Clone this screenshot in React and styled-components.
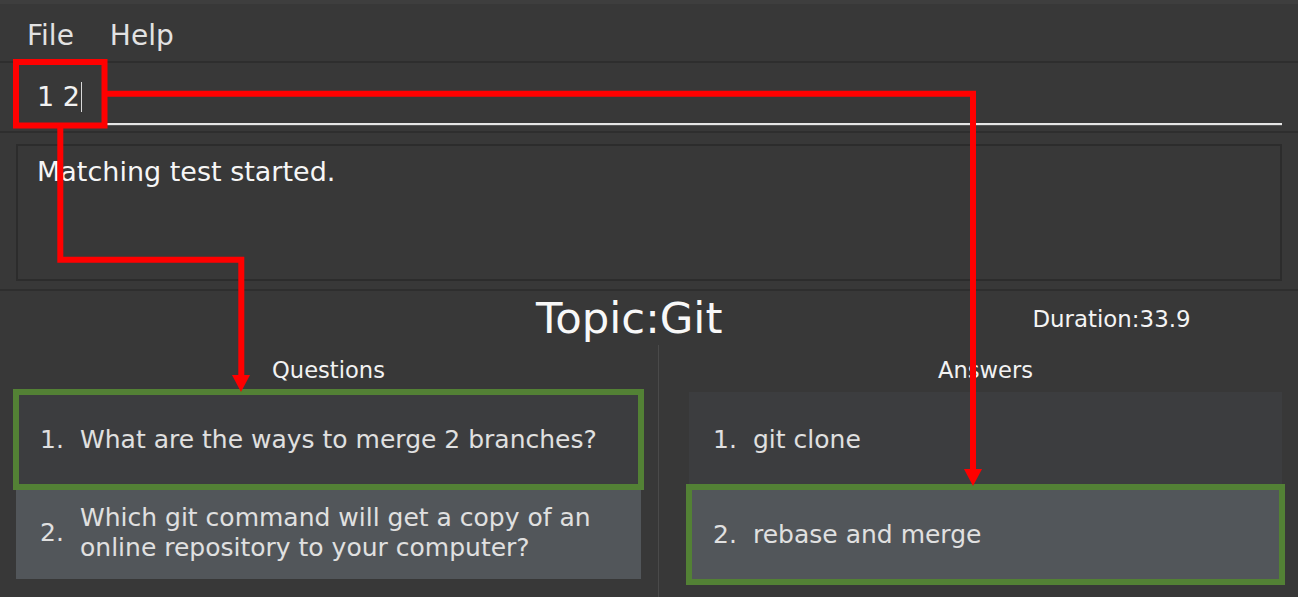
import React from 'react';
import styled, { createGlobalStyle } from 'styled-components';

const GlobalStyle = createGlobalStyle`
  html, body {
    margin: 0;
    padding: 0;
    background: #383838;
  }
  body {
    font-family: "DejaVu Sans", "Noto Sans", sans-serif;
    color: #e6e6e6;
  }
`;

const Window = styled.div`
  position: relative;
  width: 1298px;
  height: 597px;
  overflow: hidden;
  background: #383838;
`;

const MenuBar = styled.nav`
  display: flex;
  gap: 36px;
  border-top: 4px solid #3e3e3e;
  border-bottom: 2px solid #2e2e2e;
  padding: 15px 0 9px 27px;
`;

const MenuItem = styled.span`
  font-size: 28px;
  line-height: 33px;
  color: #e2e2e2;
`;

const CommandArea = styled.div`
  padding: 18px 16px 6px;
  border-bottom: 2px solid #2e2e2e;
`;

const CommandInput = styled.div`
  display: flex;
  align-items: center;
  padding: 0 0 10px 21px;
  border-bottom: 2px solid #e6e6e6;
  box-shadow: 0 1px 0 #555;
  font-size: 27px;
  line-height: 32px;
  color: #f2f2f2;
`;

const Caret = styled.span`
  display: inline-block;
  width: 1px;
  height: 30px;
  margin-left: 1px;
  background: #d8d8d8;
`;

const ResultArea = styled.div`
  padding: 11px 16px 8px;
  border-bottom: 2px solid #2e2e2e;
`;

const ResultBox = styled.div`
  box-sizing: border-box;
  height: 137px;
  border: 2px solid #2c2c2c;
  padding: 10px 19px;
  font-size: 27px;
  line-height: 32px;
  color: #f6f6f6;
`;

const TopicRow = styled.div`
  display: flex;
  align-items: flex-start;
  padding-top: 3px;
`;

const TopicTitle = styled.h1`
  margin: 0 0 0 536px;
  font-size: 43.4px;
  font-weight: normal;
  line-height: 49px;
  color: #f8f8f8;
`;

const Duration = styled.span`
  margin: 12px 0 0 310px;
  font-size: 22.9px;
  line-height: 26px;
  color: #f4f4f4;
`;

const Columns = styled.div`
  display: grid;
  grid-template-columns: 658px 1fr;
  margin-top: 2px;
  height: 252px;
`;

const Column = styled.section`
  padding: ${(p) => (p.$right ? '12px 16px 0 30px' : '12px 17px 0 16px')};
  border-left: ${(p) => (p.$right ? '1px solid #4a4a4a' : 'none')};
`;

const ColumnTitle = styled.h2`
  margin: 0 0 9px;
  text-align: center;
  font-size: 22.6px;
  font-weight: normal;
  line-height: 26px;
  color: #f2f2f2;
`;

const List = styled.ol`
  margin: 0;
  padding: 0;
  list-style: none;
`;

const Cell = styled.li`
  box-sizing: border-box;
  display: flex;
  align-items: center;
  height: ${(p) => p.$height}px;
  padding-left: 24px;
  background: ${(p) => (p.$light ? '#52565a' : '#3c3d3f')};
  outline: ${(p) => (p.$marked ? '6px solid #538135' : 'none')};
  outline-offset: -3px;
  font-size: 25px;
  line-height: 30px;
  color: #e0e0e0;
`;

const Index = styled.span`
  flex: 0 0 40px;
`;

const CellText = styled.span`
  flex: 1;
`;

const Annotations = styled.svg`
  position: absolute;
  left: 0;
  top: 0;
  pointer-events: none;
`;

const questions = [
  { text: 'What are the ways to merge 2 branches?', height: 95, marked: true },
  {
    text: 'Which git command will get a copy of an online repository to your computer?',
    height: 92,
    light: true
  }
];

const answers = [
  { text: 'git clone', height: 95 },
  { text: 'rebase and merge', height: 95, light: true, marked: true }
];

const renderCells = (items) =>
  items.map((item, i) => (
    <Cell
      key={item.text}
      $height={item.height}
      $light={item.light}
      $marked={item.marked}
    >
      <Index>{i + 1}.</Index>
      <CellText>{item.text}</CellText>
    </Cell>
  ));

const App = () => (
  <Window>
    <GlobalStyle />
    <MenuBar>
      <MenuItem>File</MenuItem>
      <MenuItem>Help</MenuItem>
    </MenuBar>
    <CommandArea>
      <CommandInput>
        1 2<Caret />
      </CommandInput>
    </CommandArea>
    <ResultArea>
      <ResultBox>Matching test started.</ResultBox>
    </ResultArea>
    <TopicRow>
      <TopicTitle>Topic:Git</TopicTitle>
      <Duration>Duration:33.9</Duration>
    </TopicRow>
    <Columns>
      <Column>
        <ColumnTitle>Questions</ColumnTitle>
        <List>{renderCells(questions)}</List>
      </Column>
      <Column $right>
        <ColumnTitle>Answers</ColumnTitle>
        <List>{renderCells(answers)}</List>
      </Column>
    </Columns>
    <Annotations width="1298" height="597" viewBox="0 0 1298 597">
      <rect
        x="16"
        y="62"
        width="88.5"
        height="63.5"
        fill="none"
        stroke="#ff0000"
        strokeWidth="6"
      />
      <polyline
        points="104.5,93.7 973,93.7 973,472"
        fill="none"
        stroke="#ff0000"
        strokeWidth="6"
      />
      <polygon points="964,469 982,469 973,486" fill="#ff0000" />
      <polyline
        points="60.3,125 60.3,259.7 241.3,259.7 241.3,378"
        fill="none"
        stroke="#ff0000"
        strokeWidth="6"
      />
      <polygon points="232,375 250,375 241,392" fill="#ff0000" />
    </Annotations>
  </Window>
);

export default App;
